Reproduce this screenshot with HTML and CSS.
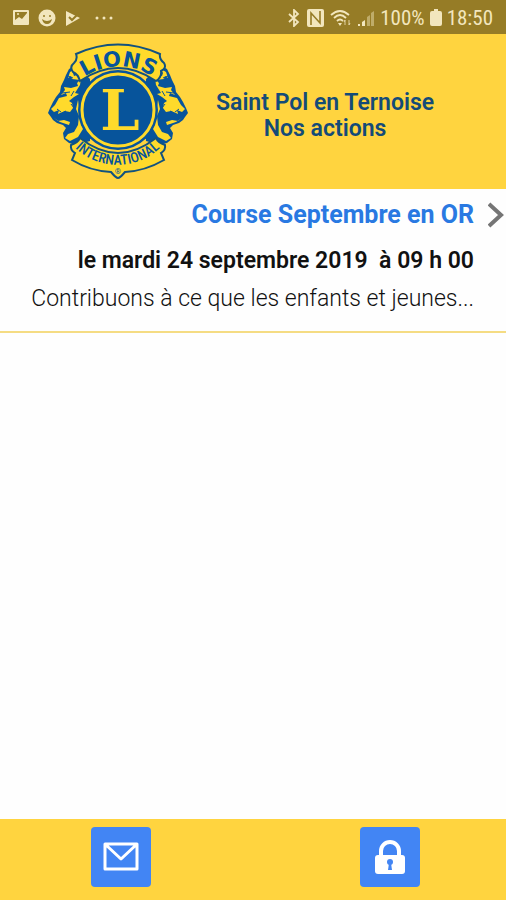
FILE: index.html
```html
<!DOCTYPE html>
<html lang="fr">
<head>
    <meta charset="UTF-8">
    <meta name="viewport" content="width=device-width, initial-scale=1.0">
    <title>Nos actions</title>
    <link rel="stylesheet" href="styles.css">
</head>
<body>
    <div class="status-bar">
        <div class="status-left">
            <svg width="18" height="18" viewBox="0 0 18 18">
                <path fill="currentColor" fill-rule="evenodd" d="M2 1h14q1 0 1 1v13q0 1-1 1H2q-1 0-1-1V2q0-1 1-1zM3 3v8l4-3 3 2 5-6V3z"/>
                <circle cx="6" cy="5" r="1" fill="currentColor"/>
            </svg>
            <svg width="18" height="18" viewBox="0 0 18 18">
                <circle cx="9" cy="9" r="8.5" fill="currentColor"/>
                <circle cx="6" cy="7" r="1" fill="#967c26"/>
                <circle cx="12" cy="7" r="1" fill="#967c26"/>
                <path d="M4 10q5 4 10 0-1 5-5 5t-5-5z" fill="#967c26"/>
            </svg>
            <svg width="18" height="18" viewBox="0 0 18 18">
                <path d="M2 2l14 7L2 17z" fill="currentColor"/>
                <path d="M5 8l3 3 7-7" fill="none" stroke="#967c26" stroke-width="2"/>
            </svg>
            <svg class="more" width="20" height="18" viewBox="0 0 20 18">
                <g fill="currentColor">
                    <circle cx="3" cy="9" r="1.5"/>
                    <circle cx="10" cy="9" r="1.5"/>
                    <circle cx="17" cy="9" r="1.5"/>
                </g>
            </svg>
        </div>
        <div class="status-right">
            <svg width="14" height="18" viewBox="0 0 14 18">
                <path d="M2 5l9 8-4 4V1l4 4-9 8" fill="none" stroke="currentColor" stroke-width="1.8"/>
            </svg>
            <svg width="19" height="18" viewBox="0 0 19 18">
                <rect x="1" y="0" width="17" height="18" rx="2" fill="currentColor"/>
                <path d="M5 16V4l9 10V2" fill="none" stroke="#967c26" stroke-width="1.6"/>
            </svg>
            <svg width="22" height="18" viewBox="0 0 22 18">
                <g fill="none" stroke="currentColor" stroke-width="1.8">
                    <path d="M1 6q9-8 18 0"/>
                    <path d="M4 9q6-6 12 0"/>
                    <path d="M7 12q3-3 6 0"/>
                </g>
                <path d="M10 17l-2-3h4z" fill="currentColor"/>
                <path d="M15 16v-5l-1 2M19 11v5l1-2" fill="none" stroke="currentColor" opacity=".8"/>
            </svg>
            <svg width="18" height="18" viewBox="0 0 18 18">
                <path d="M1 17v-2h2v2zM5 17v-4l3-2v6z" fill="currentColor"/>
                <path d="M10 17V8l3-2v11zM14 17V4l3-2v15z" fill="currentColor" opacity=".45"/>
            </svg>
            <span>100%</span>
            <svg width="12" height="18" viewBox="0 0 12 18">
                <path d="M4 0h4v2h2q2 0 2 2v11q0 2-2 2H2q-2 0-2-2V4q0-2 2-2h2z" fill="currentColor"/>
            </svg>
            <span>18:50</span>
        </div>
    </div>

    <header class="header">
        <svg class="logo" width="142" height="138" viewBox="46 42 142 138" role="img" aria-label="Lions International">
            <defs>
                <path id="arc-top" d="M77 82A60 60 0 0 1 160 82"/>
                <path id="arc-bottom" d="M73 145A62 62 0 0 0 162 145"/>
                <!-- one head, mirrored for the other side -->
                <g id="lion">
                    <path class="blue" d="M76 64L69 68 66 74 64 79 61 85 60 91 56 96 53 101 50 107 48 112 51 116 53 119 57 122 63 124 66 127 63 132 64 138 69 142 76 144 90 140 90 78z"/>
                    <path class="yellow" d="M75 68l-5 3-2 6 3-2 1 3 8 1-3 3 1 3-7 2-7-1 1 3-4 5 5-2 1 3-8 2-4 7-4 4 3 3 5-2-1 4 7-3 5 1 3-4-1-5-3-2 5-4 5-3-4-1 5-8 1-7-4-3-3 1-1-3z"/>
                    <path class="yellow" d="M78 99l-2 9 3 7-1 9-4 7-6 2-3 4 5 3 8-4 5-8-1-6-2-9-1-8z"/>
                    <path class="yellow" d="M54 117l4 3 6-1 6 2-1 3-9-3z"/>
                    <path class="line" d="M68 75l5 2M62 92l8-1M57 108l4 3M58 114l8-4M60 117l9-4M71 103l3 4M74 90l-3 5M73 124l2-9"/>
                </g>
            </defs>
            <use href="#lion"/>
            <use href="#lion" transform="matrix(-1 0 0 1 236 0)"/>
            <path class="band" d="M76 53Q118 34 160 53 159 58 164 62 167 67 161 70 162 76 156 80 118 54 80 80 78 73 73 71 69 66 74 62 78 58 76 53z"/>
            <path class="band" d="M80 137Q118 167 156 137 158 142 165 144 166 149 161 152L164 159Q145 170 125 171 120 177 118 177 116 177 111 171 90 170 72 159L75 152Q70 149 71 144 78 142 80 137z"/>
            <circle class="blue" cx="118" cy="109" r="40"/>
            <circle class="ring" cx="118" cy="109" r="36"/>
            <text class="logo-letter" x="120" y="129">L</text>
            <text class="logo-top"><textPath href="#arc-top" startOffset="50%">LIONS</textPath></text>
            <text class="logo-bottom"><textPath href="#arc-bottom" startOffset="50%">INTERNATIONAL</textPath></text>
            <text class="logo-mark" x="118" y="173">®</text>
        </svg>
        <h1>Saint Pol en Ternoise<br>Nos actions</h1>
    </header>

    <main class="content">
        <a class="action" href="#">
            <div class="action-text">
                <h2>Course Septembre en OR</h2>
                <p class="date">le mardi 24 septembre 2019&nbsp; à 09 h 00</p>
                <p class="summary">Contribuons à ce que les enfants et jeunes...</p>
            </div>
            <svg class="chevron" width="18" height="28" viewBox="0 0 18 28">
                <path d="M1 3l12 11L1 25" fill="none" stroke="#757575" stroke-width="4"/>
            </svg>
        </a>
    </main>

    <footer class="footer">
        <button type="button" aria-label="Message">
            <svg width="36" height="30" viewBox="0 0 36 30">
                <path d="M2 2h32v25H2zM3 3l15 14L33 3" fill="none" stroke="#fff" stroke-width="3" stroke-linejoin="round"/>
            </svg>
        </button>
        <button type="button" aria-label="Connexion">
            <svg width="32" height="36" viewBox="0 0 32 36">
                <path d="M7 17v-5a9 9 0 0 1 18 0v5" fill="none" stroke="#fff" stroke-width="4"/>
                <rect x="1" y="16" width="30" height="19" rx="3" fill="#fff"/>
                <circle cx="16" cy="23" r="3" fill="#4285f4"/>
                <path d="M15 24h2l1 7h-4z" fill="#4285f4"/>
            </svg>
        </button>
    </footer>
</body>
</html>
```
FILE: styles.css
```css
* {
    box-sizing: border-box;
}
body {
    margin: 0;
    min-height: 100vh;
    display: flex;
    flex-direction: column;
    font-family: Roboto, sans-serif;
    background-color: #fefefe;
}
h1, h2, p {
    margin: 0;
}
.status-bar {
    display: flex;
    justify-content: space-between;
    align-items: center;
    height: 34px;
    padding: 2px 13px 0 12px;
    background-color: #967c26;
    color: #f2e6bd;
}
.status-left, .status-right {
    display: flex;
    align-items: center;
}
.status-left {
    gap: 8px;
}
.status-left .more {
    margin-left: 4px;
}
.status-right {
    gap: 5px;
    font-family: "Roboto Condensed", Roboto, sans-serif;
    font-size: 21px;
}
.header {
    display: flex;
    align-items: center;
    height: 155px;
    padding: 0 74px 0 46px;
    background-color: #ffd43f;
}
.logo {
    flex: none;
}
.header h1 {
    flex: 1;
    padding-left: 28px;
    padding-top: 8px;
    font-size: 23px;
    line-height: 26px;
    font-weight: 600;
    text-align: center;
    white-space: nowrap;
    color: #144b78;
}
.blue {
    fill: #07549b;
}
.yellow {
    fill: #ffda2b;
}
.line {
    fill: none;
    stroke: #07549b;
    stroke-width: 1;
}
.band {
    fill: #ffda2b;
    stroke: #12527f;
    stroke-width: 2;
}
.ring {
    fill: #07549b;
    stroke: #ffda2b;
    stroke-width: 3;
}
.logo text {
    text-anchor: middle;
    fill: #07549b;
}
.logo .logo-letter {
    font: bold 56px "DejaVu Serif", serif;
    fill: #ffda2b;
}
.logo-top {
    font: bold 21px "DejaVu Sans", sans-serif;
}
.logo-bottom {
    font: 500 14px "Roboto Condensed", Roboto, sans-serif;
}
.logo-mark {
    font: 8px Roboto, sans-serif;
}
.content {
    flex: 1;
}
.action {
    display: flex;
    align-items: flex-start;
    padding: 8px 0 16px;
    border-bottom: 2px solid #f5dc83;
    color: #111;
    text-decoration: none;
}
.action-text {
    flex: 1;
    text-align: right;
    white-space: nowrap;
}
.action h2 {
    font-size: 25px;
    line-height: 36px;
    font-weight: 700;
    color: #2979e2;
}
.date {
    font-size: 23px;
    line-height: 32px;
    padding-top: 12px;
    font-weight: 600;
}
.summary {
    font-size: 23px;
    line-height: 32px;
    padding-top: 6px;
    font-weight: 300;
}
.chevron {
    margin: 4px 0 0 14px;
}
.footer {
    display: flex;
    height: 81px;
    padding: 8px 17% 0 18%;
    justify-content: space-between;
    background-color: #ffd43f;
}
.footer button {
    display: flex;
    align-items: center;
    justify-content: center;
    width: 60px;
    height: 60px;
    padding: 0;
    border: none;
    border-radius: 4px;
    background-color: #4285f4;
    cursor: pointer;
}
```
